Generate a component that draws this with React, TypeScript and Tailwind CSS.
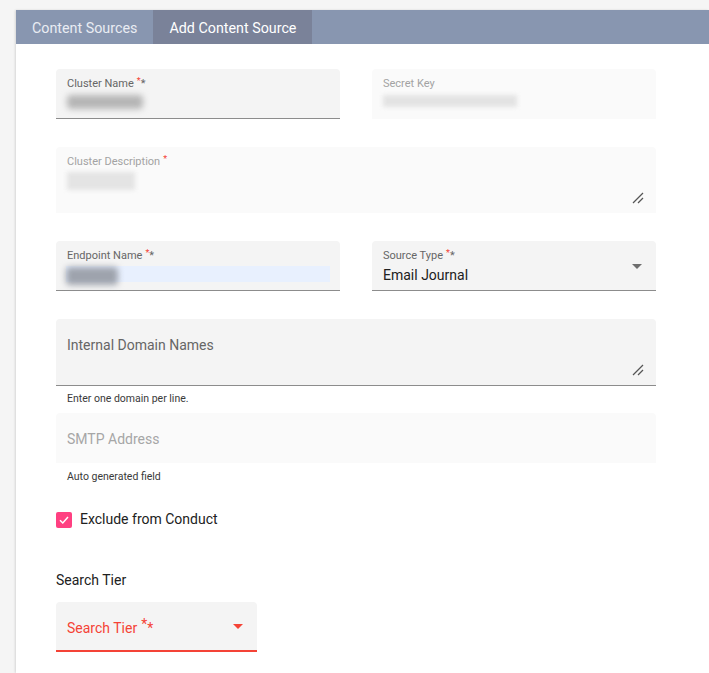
import React from 'react';

const font = { fontFamily: 'Roboto, "Noto Sans", sans-serif' };

function Req({ black = true }: { black?: boolean }) {
    return (
        <>
            <span className="relative -top-[3px] ml-[3px] text-[9px] text-[#f44336]">*</span>
            {black && <span>*</span>}
        </>
    );
}

function ResizeHandle() {
    return (
        <svg className="absolute right-[12px] bottom-[9px]" width="12" height="12" viewBox="0 0 12 12">
            <line x1="1" y1="11" x2="11" y2="1" stroke="#555" strokeWidth="1.3" />
            <line x1="6" y1="11" x2="11" y2="6" stroke="#555" strokeWidth="1.3" />
        </svg>
    );
}

function Caret({ color }: { color: string }) {
    return (
        <svg width="10" height="5" viewBox="0 0 10 5" className="shrink-0">
            <path d="M0 0 L10 0 L5 5 Z" fill={color} />
        </svg>
    );
}

export default function App() {
    return (
        <div className="min-h-screen bg-[#f5f5f5] pt-[10px] pl-4 flex" style={font}>
            <div className="flex-1 bg-white shadow-[-1px_0_2px_rgba(0,0,0,0.12)] min-h-[663px]">
                {/* Tabs */}
                <div className="flex h-[34px] bg-[#8896b0]">
                    <div className="px-4 pt-[3px] flex items-center text-[14.3px] text-[#e9ecf3]">Content Sources</div>
                    <div className="px-4 pt-[3px] flex items-center text-[14.3px] text-white bg-[#7a8299]">Add Content Source</div>
                </div>

                <div className="pl-10 pt-[25px] w-[640px]">
                    {/* Row 1 */}
                    <div className="grid grid-cols-2 gap-8">
                        <div className="h-[50px] bg-[#f4f4f4] rounded-t border-b border-[#8c8c8c] px-[11px] pt-[8px]">
                            <div className="text-[11px] leading-[14px] text-[#666]">Cluster Name<Req /></div>
                            <div className="mt-[4px] h-[14px] w-[76px] bg-[#b5b5b5] blur-[3px] rounded" />
                        </div>
                        <div className="h-[50px] bg-[#fafafa] rounded-t px-[11px] pt-[8px]">
                            <div className="text-[11px] leading-[14px] text-[#a3a3a3]">Secret Key</div>
                            <div className="mt-[4px] h-[12px] w-[134px] bg-[#e3e3e3] blur-[2px]" />
                        </div>
                    </div>

                    {/* Description */}
                    <div className="relative mt-[28px] h-[66px] bg-[#fafafa] rounded-t px-[11px] pt-[8px]">
                        <div className="text-[11px] leading-[14px] text-[#a3a3a3]">Cluster Description<Req black={false} /></div>
                        <div className="mt-[3px] h-[18px] w-[68px] bg-[#e4e4e4] blur-[2px]" />
                        <ResizeHandle />
                    </div>

                    {/* Row 3 */}
                    <div className="grid grid-cols-2 gap-8 mt-[28px]">
                        <div className="h-[50px] bg-[#f4f4f4] rounded-t border-b border-[#8c8c8c] px-[10px] pt-[8px]">
                            <div className="text-[11px] leading-[14px] text-[#666] pl-[1px]">Endpoint Name<Req /></div>
                            <div className="relative mt-[3px] h-[16px] bg-[#e8f0fe]">
                                <div className="absolute left-0 top-[1px] h-[18px] w-[52px] bg-[#9ea3ad] blur-[3px] rounded" />
                            </div>
                        </div>
                        <div className="h-[50px] bg-[#f4f4f4] rounded-t border-b border-[#8c8c8c] pl-[11px] pr-[14px] pt-[8px] flex items-start justify-between">
                            <div>
                                <div className="text-[11px] leading-[14px] text-[#666]">Source Type<Req /></div>
                                <div className="text-[14px] leading-[18px] text-[#212121] mt-[3px]">Email Journal</div>
                            </div>
                            <div className="pt-[15px]"><Caret color="#6e6e6e" /></div>
                        </div>
                    </div>

                    {/* Internal Domain Names */}
                    <div className="relative mt-[28px] h-[67px] bg-[#f4f4f4] rounded-t border-b border-[#8c8c8c] px-[11px] pt-[17px]">
                        <div className="text-[14px] leading-[18px] text-[#666]">Internal Domain Names</div>
                        <ResizeHandle />
                    </div>
                    <div className="pl-[11px] text-[10.5px] leading-[14px] mt-[6px] text-[#3a3a3a]">Enter one domain per line.</div>

                    {/* SMTP */}
                    <div className="mt-[7px] h-[50px] bg-[#fafafa] rounded-t px-[11px] pt-[2px] flex items-center">
                        <div className="text-[14px] leading-[18px] text-[#a6a6a6]">SMTP Address</div>
                    </div>
                    <div className="pl-[11px] text-[10.5px] leading-[14px] mt-[7px] text-[#3a3a3a]">Auto generated field</div>

                    {/* Checkbox */}
                    <div className="flex items-center gap-2 mt-[25px]">
                        <div className="w-4 h-4 rounded-[2px] bg-[#ff4081] flex items-center justify-center">
                            <svg width="12" height="12" viewBox="0 0 12 12">
                                <path d="M2 6.2 L4.8 9 L10 3" fill="none" stroke="white" strokeWidth="1.5" />
                            </svg>
                        </div>
                        <span className="text-[14px] text-[#212121]">Exclude from Conduct</span>
                    </div>

                    {/* Search Tier */}
                    <div className="mt-[41px] text-[14px] leading-[18px] text-[#212121]">Search Tier</div>
                    <div className="mt-[13px] w-[201px] h-[50px] bg-[#f4f4f4] rounded-t border-b-2 border-[#f44336] pl-[11px] pr-[14px] flex items-center justify-between">
                        <div className="text-[14px] leading-[18px] text-[#f44336] pt-[3px]">
                            Search Tier
                            <span className="relative -top-[4px] ml-[4px]">*</span>
                            <span>*</span>
                        </div>
                        <Caret color="#f44336" />
                    </div>
                </div>
            </div>
        </div>
    );
}
